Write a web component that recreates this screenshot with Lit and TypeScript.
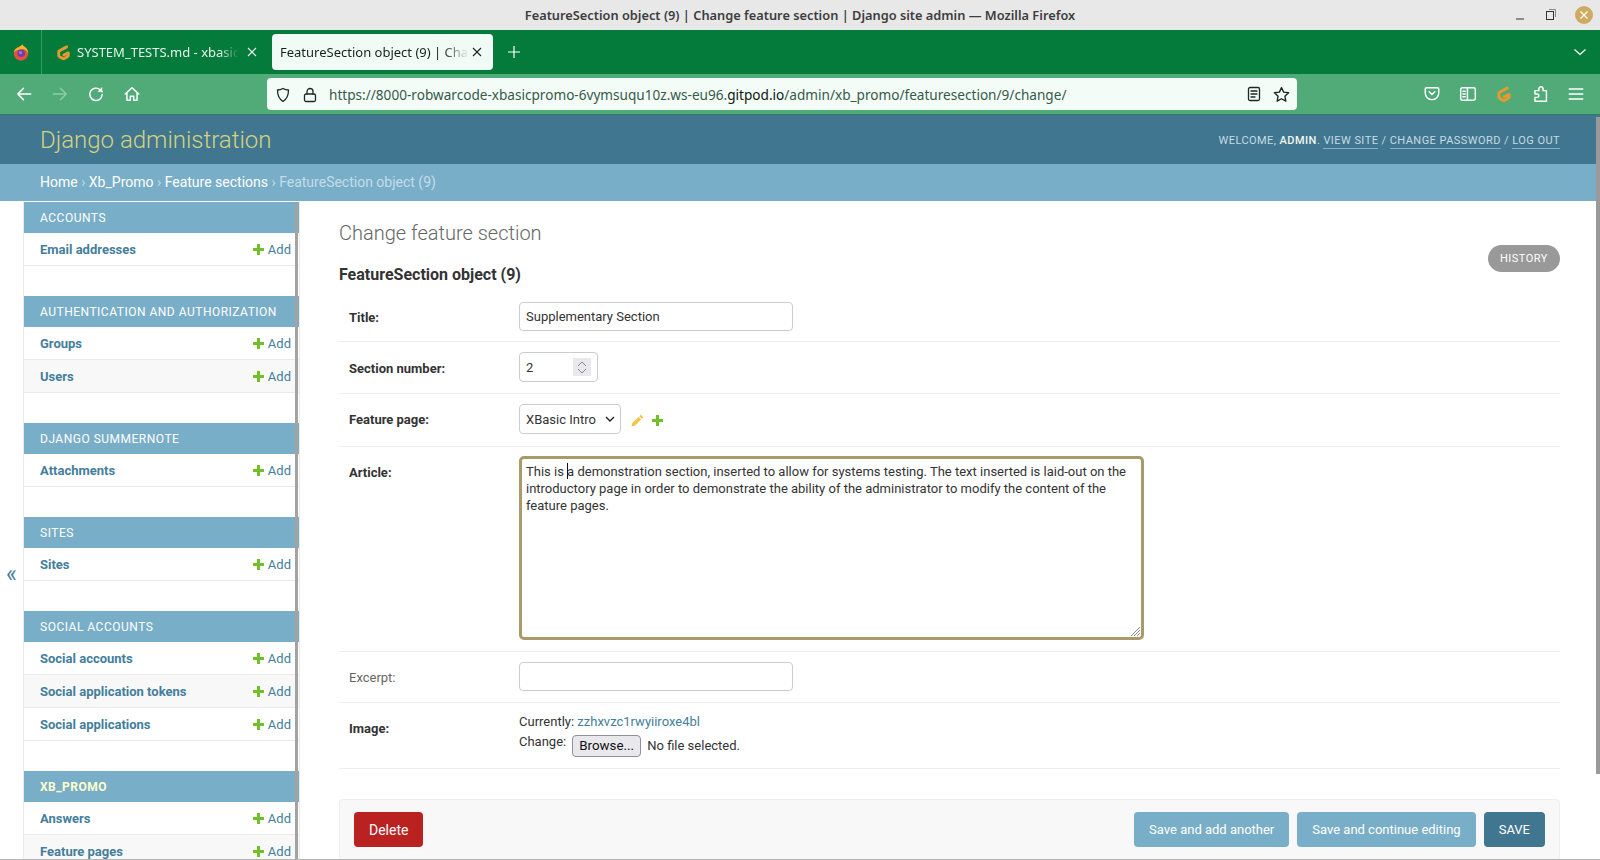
import { LitElement, html, css, svg } from 'lit';
import { customElement } from 'lit/decorators.js';

type Module = { name: string; active?: boolean; rows: string[] };

const MODULES: Module[] = [
  { name: 'Accounts', rows: ['Email addresses'] },
  { name: 'Authentication and Authorization', rows: ['Groups', 'Users'] },
  { name: 'Django Summernote', rows: ['Attachments'] },
  { name: 'Sites', rows: ['Sites'] },
  { name: 'Social Accounts', rows: ['Social accounts', 'Social application tokens', 'Social applications'] },
  { name: 'Xb_Promo', active: true, rows: ['Answers', 'Feature pages'] },
];

const icon = (w: number, body: unknown, color = '#fff') => html`<svg
  width=${w}
  height=${w}
  viewBox="0 0 16 16"
  fill="none"
  stroke=${color}
  stroke-width="1.3"
  stroke-linecap="round"
  stroke-linejoin="round"
>${body}</svg>`;

const gitpodMark = (size: number) => html`<svg width=${size} height=${size} viewBox="0 0 16 16" fill="none">
  <path d="M11 2.700 4.300 6.300c-.5.3-.8.8-.8 1.300v3c0 .6.3 1.100.8 1.300l3 1.700c.4.3 1 .3 1.400 0l3-1.700c.5-.2.800-.7.800-1.300V8.400L8.300 10.300" stroke="#e39a30" stroke-width="2.700" stroke-linecap="round" stroke-linejoin="round"/>
</svg>`;

const plusIcon = html`<svg class="plus" width="11" height="11" viewBox="0 0 11 11"><path d="M4 0h3v4h4v3H7v4H4V7H0V4h4z" fill="#70bf2b"/></svg>`;

@customElement('app-root')
export class AppRoot extends LitElement {
  static override styles = css`
    :host {
      display: block;
      position: relative;
      height: 860px;
      overflow: hidden;
      box-sizing: border-box;
      border-bottom: 1px solid #b4b4b4;
      font-family: Roboto, 'Liberation Sans', sans-serif;
      font-size: 14px;
      color: #333;
      background: #fff;
    }

    .titlebar {
      height: 30px;
      background: #e8e8e8;
      display: flex;
      align-items: center;
      justify-content: center;
      position: relative;
      font-family: 'Noto Sans', sans-serif;
      font-size: 12.8px;
      font-weight: 600;
      color: #3d3d3d;
    }
    .winctl {
      position: absolute;
      top: 0;
      right: 7px;
      height: 30px;
      display: flex;
      align-items: center;
      gap: 17px;
    }
    .winclose {
      width: 18px;
      height: 18px;
      border-radius: 50%;
      background: #cfaa63;
      display: flex;
      align-items: center;
      justify-content: center;
    }

    .tabbar {
      height: 44px;
      background: #047b3b;
      display: flex;
      align-items: center;
      font-family: 'Noto Sans', sans-serif;
      font-size: 13px;
    }
    .ff {
      width: 42px;
      height: 44px;
      box-sizing: border-box;
      border-right: 1px solid #3d9a68;
      display: flex;
      align-items: center;
      justify-content: center;
    }
    .tab {
      height: 36px;
      display: flex;
      align-items: center;
      position: relative;
      white-space: nowrap;
      overflow: hidden;
    }
    .tab-idle {
      width: 222px;
      margin-left: 8px;
      padding-right: 12px;
      box-sizing: border-box;
      gap: 5px;
      color: #e6f3ec;
    }
    .fav {
      margin-left: 5px;
      display: flex;
    }
    .tab-active {
      width: 221px;
      margin-left: 0;
      padding: 0 8px;
      box-sizing: border-box;
      background: #f1fbf6;
      border-radius: 4px;
      color: #15241b;
    }
    .tab-text {
      flex: 1;
      min-width: 0;
      overflow: hidden;
    }
    .tab-idle .tab-text {
      -webkit-mask-image: linear-gradient(to right, #000 88%, transparent);
      mask-image: linear-gradient(to right, #000 88%, transparent);
    }
    .tab-active .tab-text {
      -webkit-mask-image: linear-gradient(to right, #000 86%, transparent);
      mask-image: linear-gradient(to right, #000 86%, transparent);
    }
    .tab-x {
      width: 16px;
      flex: none;
      display: flex;
      align-items: center;
      justify-content: center;
    }
    .newtab {
      margin-left: 14px;
      display: flex;
    }
    .tabbar-end {
      margin-left: auto;
      margin-right: 13px;
      display: flex;
    }

    .toolbar {
      height: 40px;
      background: #50ab78;
      border-bottom: 1px solid #2f7f58;
      box-sizing: content-box;
      display: flex;
      align-items: center;
      padding-left: 15px;
    }
    .navbtns {
      display: flex;
      gap: 18px;
      width: 252px;
    }
    .urlbar {
      width: 1030px;
      height: 32px;
      box-sizing: border-box;
      background: #f3fcf7;
      border-radius: 4px;
      display: flex;
      align-items: center;
      padding: 1px 7px 0 8px;
      font-family: 'Noto Sans', sans-serif;
      font-size: 13.6px;
      color: #38594a;
      white-space: nowrap;
    }
    .urlbar .lock {
      margin: 0 11px 0 11px;
      display: flex;
    }
    .urlbar b {
      font-weight: 400;
      color: #0c1811;
    }
    .url-end {
      margin-left: auto;
      display: flex;
      gap: 11px;
    }
    .tools {
      display: flex;
      gap: 18px;
      margin-left: 126px;
    }

    #header {
      height: 49px;
      background: #417690;
      color: #ffc;
      display: flex;
      align-items: center;
      justify-content: space-between;
      padding: 0 40px;
    }
    #branding {
      font-size: 24px;
      font-weight: 300;
      color: #d4d27f;
    }
    #user-tools {
      font-size: 11px;
      letter-spacing: 0.45px;
      text-transform: uppercase;
      color: #c6dbe2;
      padding-top: 2px;
    }
    #user-tools strong {
      font-weight: 500;
      color: #f1f6ee;
    }
    #user-tools a {
      color: #c6dbe2;
      border-bottom: 1px solid #7fb0c8;
      padding-bottom: 1px;
    }

    .breadcrumbs {
      height: 37px;
      box-sizing: border-box;
      padding: 0 40px 2px;
      background: #79aec8;
      display: flex;
      align-items: center;
      color: #c4dce8;
      white-space: pre;
    }
    .breadcrumbs a {
      color: #fff;
    }
    .breadcrumbs .last {
      color: #c4dce8;
    }

    .page {
      display: flex;
      align-items: flex-start;
    }
    .toggle {
      width: 23px;
      flex: none;
      height: 659px;
      display: flex;
      align-items: center;
      justify-content: center;
      color: #447e9b;
      font-size: 23px;
      padding-top: 88px;
      box-sizing: border-box;
    }
    .sidebar {
      width: 277px;
      flex: none;
      box-sizing: border-box;
      border-left: 1px solid #eaeaea;
      border-right: 1px solid #eaeaea;
      padding-top: 1px;
      height: 659px;
      overflow: hidden;
      position: relative;
    }
    .sb-thumb {
      position: absolute;
      top: 3px;
      right: 1px;
      width: 3px;
      height: 700px;
      background: #a3a3a3;
    }
    .module {
      margin-bottom: 30px;
    }
    .module-cap {
      height: 31px;
      background: #79aec8;
      display: flex;
      align-items: center;
      padding-left: 16px;
      font-size: 12px;
      letter-spacing: 0.5px;
      text-transform: uppercase;
      color: #fff;
      font-weight: 400;
    }
    .module-cap.active {
      font-weight: 700;
      color: #ffc;
    }
    .module-row {
      height: 33px;
      box-sizing: border-box;
      border-bottom: 1px solid #eaeaea;
      display: flex;
      align-items: center;
      justify-content: space-between;
      padding: 0 8px 0 16px;
      font-size: 13px;
    }
    .module-row:nth-child(even) {
      background: #f8f8f8;
    }
    .model {
      font-weight: 700;
      color: #447e9b;
    }
    .add {
      display: flex;
      align-items: center;
      gap: 4px;
      color: #447e9b;
    }

    .content {
      flex: 1;
      min-width: 0;
      padding: 20px 40px 0 39px;
    }
    .content-head {
      display: flex;
      justify-content: space-between;
      align-items: flex-start;
    }
    h1 {
      margin: 0;
      font-size: 20px;
      font-weight: 300;
      line-height: 24px;
      color: #666;
    }
    .history {
      margin-top: 24px;
      width: 72px;
      height: 27px;
      border-radius: 14px;
      background: #999;
      color: #fff;
      font-size: 11px;
      letter-spacing: 0.5px;
      display: flex;
      align-items: center;
      justify-content: center;
    }
    h2 {
      margin: -7px 0 7px;
      font-size: 16px;
      font-weight: 700;
      line-height: 20px;
      color: #333;
    }
    .form-row {
      display: flex;
      padding: 10px 0 10px 10px;
      border-bottom: 1px solid #eee;
    }
    .form-row label {
      width: 170px;
      flex: none;
      font-weight: 700;
      padding-top: 8px;
      font-size: 13px;
    }
    .form-row label.opt {
      font-weight: 400;
      color: #666;
    }
    .row-number {
      padding-bottom: 11px;
    }
    .form-row.row-number label {
      padding-top: 9px;
    }
    .row-select {
      padding-bottom: 12px;
    }
    .row-article {
      padding-bottom: 11px;
    }
    .row-excerpt {
      padding: 10px 0 11px 10px;
    }
    .ctl {
      box-sizing: border-box;
      border: 1px solid #ccc;
      border-radius: 4px;
      background: #fff;
      color: #333;
      padding: 0 6px;
      display: flex;
      align-items: center;
      font-size: 13px;
    }
    .text-ctl {
      width: 274px;
      height: 29px;
    }
    .num-ctl {
      width: 79px;
      height: 30px;
      position: relative;
    }
    .spin {
      position: absolute;
      right: 6px;
      top: 5px;
      width: 18px;
      height: 18px;
      background: #e9e9ed;
      display: flex;
      flex-direction: column;
      align-items: center;
      justify-content: center;
      gap: 1px;
    }
    .sel-wrap {
      display: flex;
      align-items: center;
      gap: 10px;
    }
    .sel-ctl {
      width: 102px;
      height: 30px;
      justify-content: space-between;
      padding-right: 5px;
    }
    .rel-links {
      display: flex;
      align-items: center;
      gap: 8px;
      padding-top: 2px;
    }
    .textarea {
      position: relative;
      width: 625px;
      height: 184px;
      box-sizing: border-box;
      border: 3px solid #a99a6c;
      border-radius: 5px;
      padding: 4px 4px;
      font-size: 13px;
      line-height: 17px;
      color: #333;
      margin-top: -1px;
    }
    .caret {
      display: inline-block;
      width: 1px;
      height: 16px;
      background: #111;
      margin-right: -1px;
      vertical-align: -3px;
    }
    .grip {
      position: absolute;
      right: 0;
      bottom: 0;
    }
    .image-ctl {
      font-size: 13px;
      line-height: 16px;
      margin-top: 1px;
    }
    .image-ctl a {
      color: #447e9b;
    }
    .change {
      display: flex;
      align-items: flex-start;
      margin-top: 4px;
      gap: 6px;
      margin-bottom: 1px;
    }
    .browse {
      box-sizing: border-box;
      height: 22px;
      width: 69px;
      border: 1px solid #8f8f9d;
      border-radius: 4px;
      background: #e9e9ed;
      color: #111;
      display: flex;
      align-items: center;
      justify-content: center;
      font-size: 13.33px;
      margin-top: 1px;
    }
    .change .nofile {
      margin-top: 4px;
    }
    .submit-row {
      margin-top: 30px;
      box-sizing: border-box;
      height: 70px;
      border: 1px solid #eee;
      border-radius: 4px;
      background: #f8f8f8;
      padding: 12px 14px;
      display: flex;
      gap: 8px;
    }
    .btn {
      height: 35px;
      padding: 0 15px;
      border-radius: 4px;
      display: flex;
      align-items: center;
      font-size: 13px;
      color: #fff;
      background: #79aec8;
    }
    .btn.delete {
      background: #ba2121;
      margin-right: auto;
      font-size: 14px;
    }
    .btn.save {
      background: #417690;
      text-transform: uppercase;
    }
    .page-scroll {
      position: absolute;
      right: 0;
      top: 117px;
      width: 4px;
      height: 657px;
      background: #9a9a9a;
    }
  `;

  renderTitlebar() {
    return html`<div class="titlebar">
      FeatureSection object (9) | Change feature section | Django site admin — Mozilla Firefox
      <div class="winctl">
        <svg width="14" height="14" viewBox="0 0 14 14"><path d="M3 11h8" stroke="#333" stroke-width="1"/></svg>
        <svg width="14" height="14" viewBox="0 0 14 14" fill="none" stroke="#333">
          <rect x="2.500" y="3.500" width="7" height="8"/>
          <path d="M5 1.500h6.500V9" stroke="#888"/>
        </svg>
        <div class="winclose">
          <svg width="10" height="10" viewBox="0 0 10 10"><path d="M1.500 1.500l7 7m0-7l-7 7" stroke="#fff" stroke-width="1.200"/></svg>
        </div>
      </div>
    </div>`;
  }

  renderTabs() {
    const close = (c: string) => html`<div class="tab-x">
      <svg width="10" height="10" viewBox="0 0 10 10"><path d="M1 1l8 8m0-8l-8 8" stroke=${c} stroke-width="1.100"/></svg>
    </div>`;
    return html`<div class="tabbar">
      <div class="ff">
        <svg width="16" height="17" viewBox="0 0 16 17">
          <circle cx="8" cy="9.500" r="7.200" fill="#e8503c"/>
          <path d="M.9 8.500C1.500 5 4 3.500 6 3.200 7 2 9 1.500 9.700.3c.2 1.500 1.300 2 2.500 3 2 1.500 3.300 3.500 3 6.200-.8-2.500-3-4.500-6-4.300C6 5.200 3 6 .9 8.500z" fill="#f7b52c"/>
          <circle cx="8.200" cy="9.300" r="3.800" fill="#6d3fa6"/>
          <circle cx="7.500" cy="8.600" r="1.700" fill="#a276d6"/>
        </svg>
      </div>
      <div class="tab tab-idle">
        <span class="fav">${gitpodMark(17)}</span>
        <span class="tab-text">SYSTEM_TESTS.md - xbasic-promo</span>
        ${close('#e6f3ec')}
      </div>
      <div class="tab tab-active">
        <span class="tab-text">FeatureSection object (9) | Change feature section</span>
        ${close('#222')}
      </div>
      <div class="newtab">
        <svg width="14" height="14" viewBox="0 0 14 14"><path d="M7 1v12M1 7h12" stroke="#fff" stroke-width="1.200"/></svg>
      </div>
      <div class="tabbar-end">
        <svg width="14" height="14" viewBox="0 0 14 14" fill="none"><path d="M1.500 4.500L7 9.500l5.500-5" stroke="#fff" stroke-width="1.200"/></svg>
      </div>
    </div>`;
  }

  renderToolbar() {
    const dark = '#1d2a23';
    return html`<div class="toolbar">
      <div class="navbtns">
        ${icon(18, svg`<path d="M14 8H2.500M7.500 3l-5 5 5 5"/>`)}
        ${icon(18, svg`<path d="M2 8h11.500M8.500 3l5 5-5 5"/>`, '#8ccba8')}
        ${icon(18, svg`<path d="M13.500 8.500a5.500 5.500 0 1 1-1.700-4.200L13.500 6"/><path d="M13.500 1.800V6H9.300" fill="#fff" stroke="none"/>`)}
        ${icon(18, svg`<path d="M2 8l6-5.500L14 8M3.500 7v6.500h3V10h3v3.500h3V7"/>`)}
      </div>
      <div class="urlbar">
        ${icon(16, svg`<path d="M8 1.500c1.800 1 3.600 1.500 5.500 1.500 0 5-1.500 9-5.500 11.500C4 12 2.500 8 2.500 3 4.400 3 6.200 2.500 8 1.500z"/>`, dark)}
        <span class="lock">
          ${icon(16, svg`<rect x="2.500" y="7" width="11" height="7.500" rx="1.500"/><path d="M5 7V4.500a3 3 0 0 1 6 0V7"/>`, dark)}
        </span>
        <span>https://8000-robwarcode-xbasicpromo-6vymsuqu10z.ws-eu96.<b>gitpod.io</b>/admin/xb_promo/featuresection/9/change/</span>
        <div class="url-end">
          ${icon(16, svg`<rect x="2.500" y="1.500" width="11" height="13" rx="1.500"/><path d="M5 5h6M5 8h6M5 11h4"/>`, dark)}
          ${icon(17, svg`<path d="M8 1.500l2 4.300 4.700.6-3.500 3.200.9 4.700L8 12l-4.100 2.300.9-4.700L1.300 6.400 6 5.800z"/>`, dark)}
        </div>
      </div>
      <div class="tools">
        ${icon(18, svg`<path d="M2 3.500c0-.6.400-1 1-1h10c.6 0 1 .4 1 1V7a6 6 0 0 1-12 0z"/><path d="M5.500 6L8 8.500 10.500 6"/>`)}
        ${icon(18, svg`<rect x="1.500" y="2.500" width="13" height="11" rx="1.500"/><path d="M7.500 2.500v11M3.500 5.500h2M3.500 8h2M3.500 10.500h2"/>`)}
        ${gitpodMark(18)}
        ${icon(18, svg`<path d="M8.800 1.500c1.200 0 1.900 1 1.900 2V5h3v9.500H3.500V11H5.500c1 0 1.500-.7 1.500-1.500S6.500 8 5.500 8h-2V5h3.500V3.500c0-1 .6-2 1.800-2z"/>`)}
        ${icon(18, svg`<path d="M2 3.500h12M2 8h12M2 12.500h12"/>`)}
      </div>
    </div>`;
  }

  renderSidebar() {
    return html`<nav class="sidebar">
      ${MODULES.map(
        (m) => html`<div class="module">
          <div class="module-cap ${m.active ? 'active' : ''}">${m.name}</div>
          <div>
            ${m.rows.map(
              (r) => html`<div class="module-row">
                <span class="model">${r}</span>
                <span class="add">${plusIcon} Add</span>
              </div>`
            )}
          </div>
        </div>`
      )}
      <div class="sb-thumb"></div>
    </nav>`;
  }

  renderForm() {
    return html`<main class="content">
      <div class="content-head">
        <h1>Change feature section</h1>
        <div class="history">HISTORY</div>
      </div>
      <h2>FeatureSection object (9)</h2>
      <div class="form-row">
        <label>Title:</label>
        <div class="ctl text-ctl">Supplementary Section</div>
      </div>
      <div class="form-row row-number">
        <label>Section number:</label>
        <div class="ctl num-ctl">
          2
          <span class="spin">
            <svg width="10" height="6" viewBox="0 0 10 6" fill="none"><path d="M1 5l4-4 4 4" stroke="#888"/></svg>
            <svg width="10" height="6" viewBox="0 0 10 6" fill="none"><path d="M1 1l4 4 4-4" stroke="#888"/></svg>
          </span>
        </div>
      </div>
      <div class="form-row row-select">
        <label>Feature page:</label>
        <div class="sel-wrap">
          <div class="ctl sel-ctl">
            XBasic Intro
            <svg width="10" height="6" viewBox="0 0 10 6" fill="none"><path d="M1 1l4 4 4-4" stroke="#222" stroke-width="1.400"/></svg>
          </div>
          <div class="rel-links">
            <svg width="13" height="13" viewBox="0 0 12 12"><path d="M9 .6l2.400 2.400-1.400 1.400L7.600 2zM6.900 2.700l2.400 2.400-5.800 5.800L.4 11.600l.7-3.100z" fill="#f0c648"/></svg>
            <svg width="11" height="11" viewBox="0 0 11 11"><path d="M4 0h3v4h4v3H7v4H4V7H0V4h4z" fill="#70bf2b"/></svg>
          </div>
        </div>
      </div>
      <div class="form-row row-article">
        <label>Article:</label>
        <div class="textarea">
          This is <span class="caret"></span>a demonstration section, inserted to allow for systems testing. The text inserted is laid-out on the introductory page in order to demonstrate the ability of the administrator to modify the content of the feature pages.
          <svg class="grip" width="12" height="12" viewBox="0 0 12 12"><path d="M11 2l-9 9M11 5l-6 6M11 8l-3 3" stroke="#888"/></svg>
        </div>
      </div>
      <div class="form-row row-excerpt">
        <label class="opt">Excerpt:</label>
        <div class="ctl text-ctl"></div>
      </div>
      <div class="form-row">
        <label>Image:</label>
        <div class="image-ctl">
          <div>Currently: <a>zzhxvzc1rwyiiroxe4bl</a></div>
          <div class="change">
            <span>Change:</span>
            <div class="browse">Browse...</div>
            <span class="nofile">No file selected.</span>
          </div>
        </div>
      </div>
      <div class="submit-row">
        <div class="btn delete">Delete</div>
        <div class="btn">Save and add another</div>
        <div class="btn">Save and continue editing</div>
        <div class="btn save">Save</div>
      </div>
    </main>`;
  }

  override render() {
    return html`
      ${this.renderTitlebar()} ${this.renderTabs()} ${this.renderToolbar()}
      <header id="header">
        <div id="branding">Django administration</div>
        <div id="user-tools">
          Welcome, <strong>admin</strong>. <a>View site</a> / <a>Change password</a> / <a>Log out</a>
        </div>
      </header>
      <div class="breadcrumbs"><a>Home</a> › <a>Xb_Promo</a> › <a>Feature sections</a> › <span class="last">FeatureSection object (9)</span></div>
      <div class="page">
        <div class="toggle">«</div>
        ${this.renderSidebar()} ${this.renderForm()}
      </div>
      <div class="page-scroll"></div>
    `;
  }
}
